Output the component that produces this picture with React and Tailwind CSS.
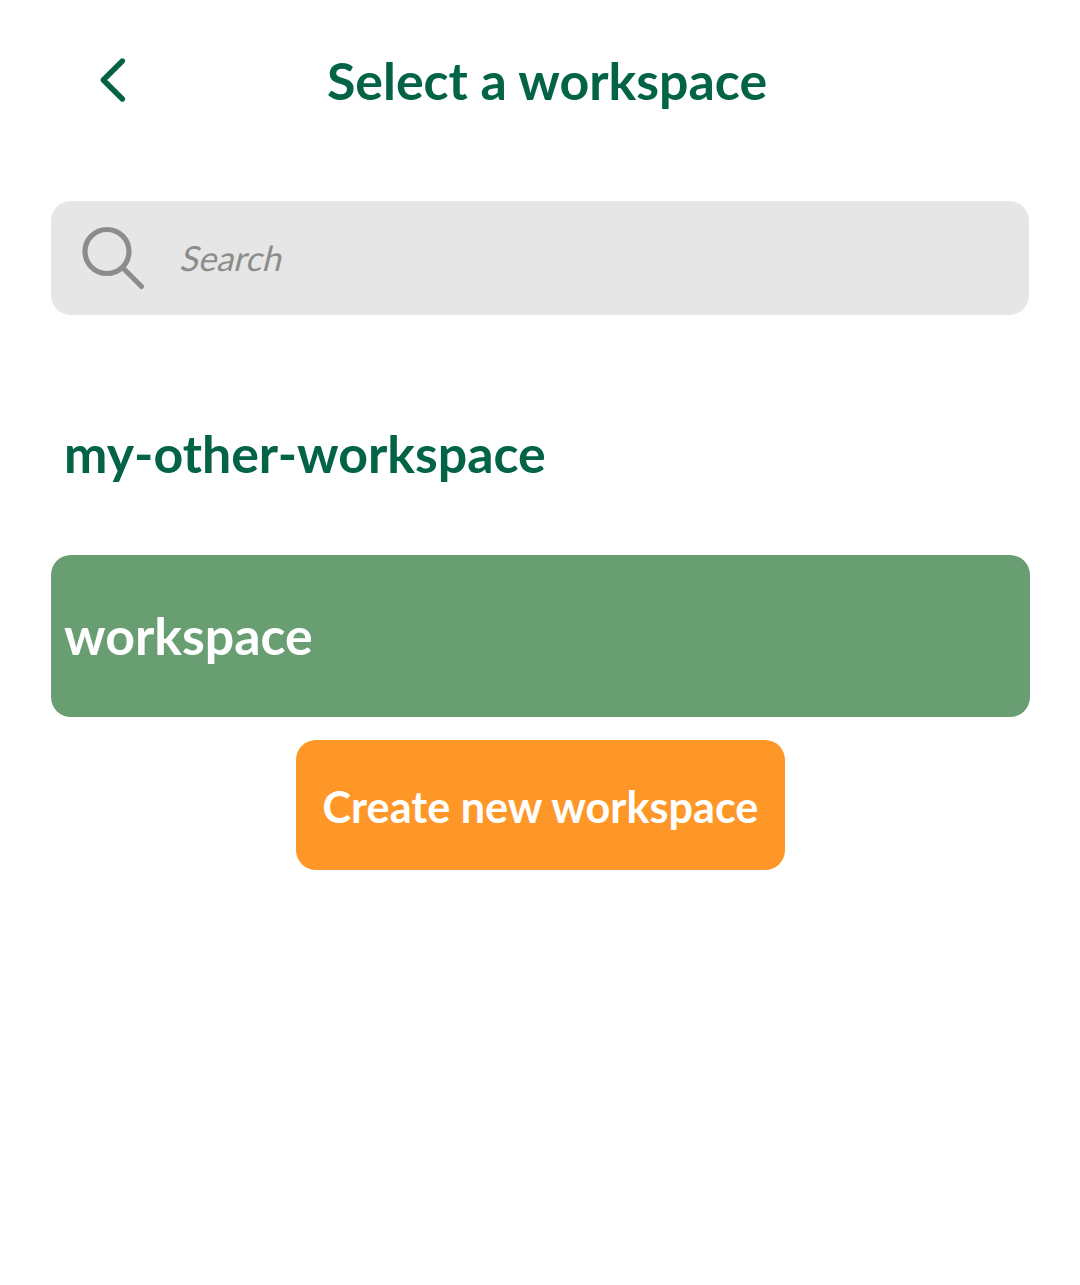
export default function App() {
  return (
    <main className="flex min-h-[1285px] w-[1080px] flex-col bg-white px-[51px] font-['Lato',sans-serif] text-[#026347]">
      <header className="flex h-[160px] items-center">
        <button aria-label="Back" className="ml-[49px] w-[26px]">
          <svg viewBox="0 0 26 44" className="h-[44px] w-[26px] overflow-visible" fill="none" stroke="currentColor" strokeWidth="5.4">
            <path d="M22.4 3 3.3 22 22.4 41" strokeLinecap="round" strokeLinejoin="round" />
          </svg>
        </button>
        <h1 className="ml-[201px] whitespace-nowrap text-[51.85px] font-bold leading-[64px]">Select a workspace</h1>
      </header>
      <label className="mt-[41px] flex h-[114px] items-center rounded-[20px] bg-[#e6e6e6] text-[#8b8d8b]">
        <svg viewBox="0 0 64 64" className="ml-[31px] size-[64px]" fill="none" stroke="currentColor" strokeWidth="5.2">
          <circle cx="25" cy="25.5" r="22" />
          <path d="m41.5 42.5 18 18" strokeLinecap="round" />
        </svg>
        <span className="ml-[36px] inline-block -skew-x-14 text-[34.6px] leading-[44px]">Search</span>
      </label>
      <div className="mt-[59px] flex h-[162px] items-center pb-[5px] pl-[13px] text-[51.85px] font-bold leading-[64px]">my-other-workspace</div>
      <div className="mt-[19px] flex h-[162px] w-[979px] items-center rounded-[20px] bg-[#699d72] pb-[3px] pl-[13px] text-[51.85px] font-bold leading-[64px] text-white">workspace</div>
      <button className="mt-[23px] ml-[245px] h-[130px] w-[489px] whitespace-nowrap rounded-[20px] bg-[#ff9728] pt-[1px] text-[43.2px] font-bold leading-[52px] text-white">Create new workspace</button>
    </main>
  );
}
